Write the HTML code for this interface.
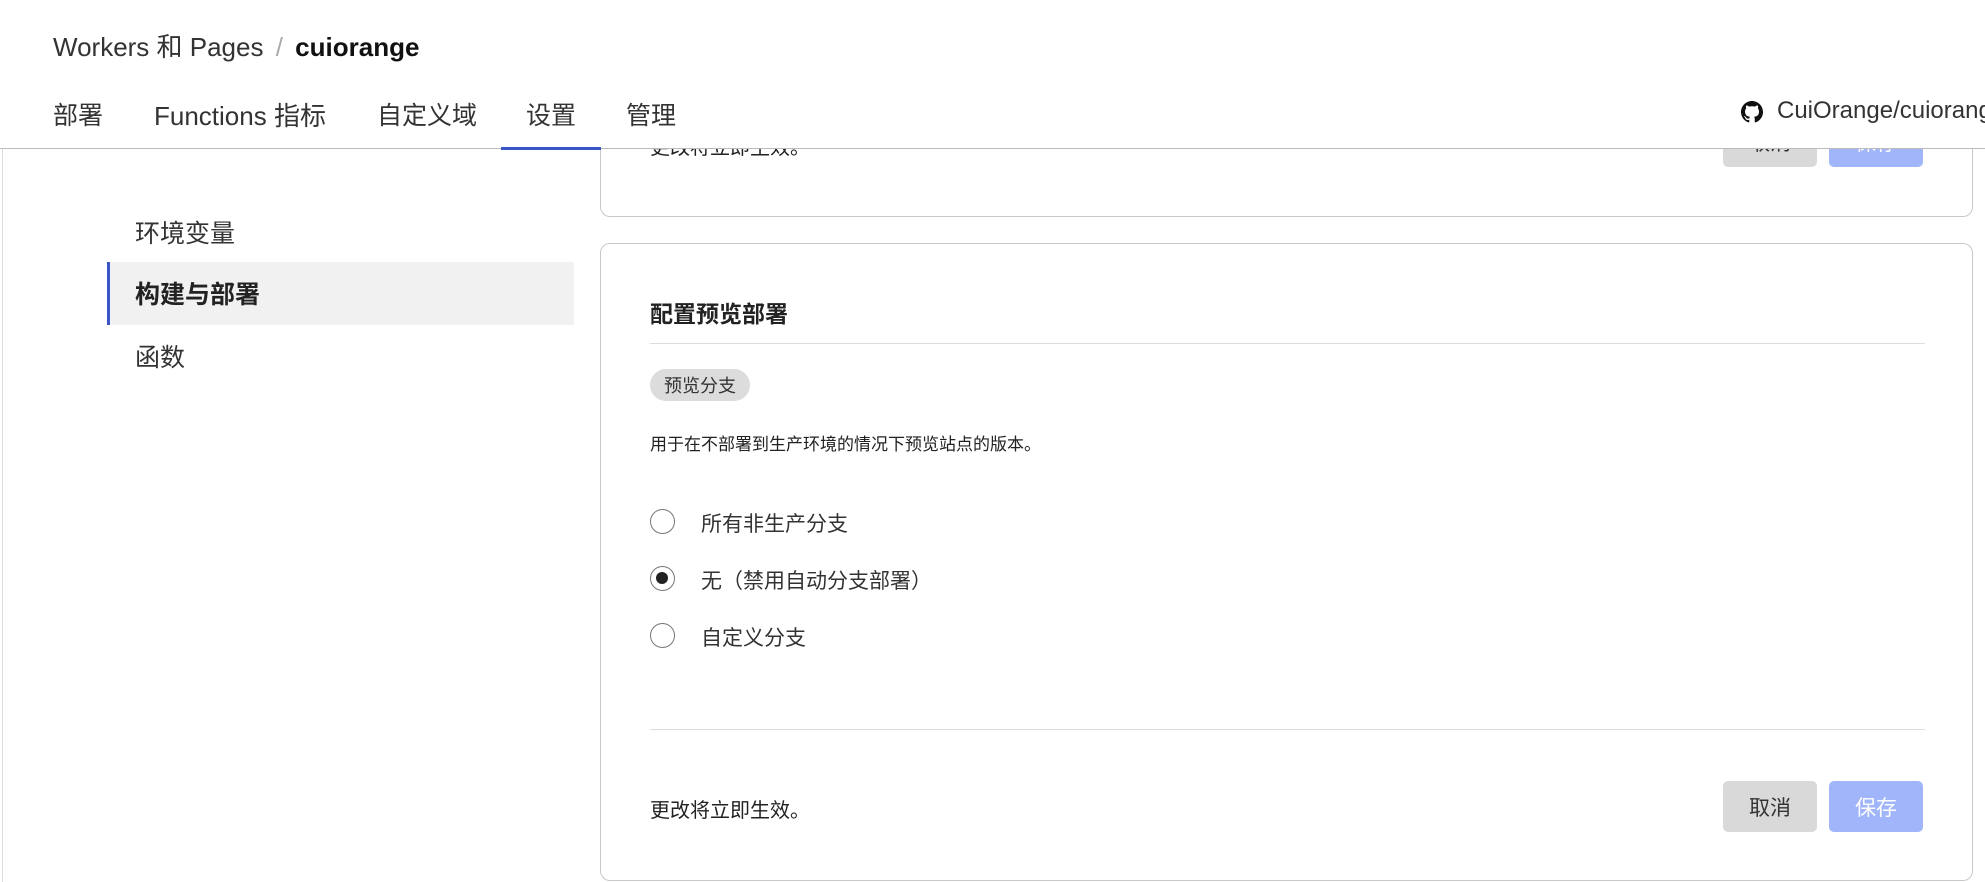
<!DOCTYPE html>
<html><head><meta charset="utf-8"><style>
*{margin:0;padding:0;box-sizing:border-box}
body{width:1985px;height:882px;overflow:hidden;background:#fff;font-family:"Liberation Sans","Noto Sans CJK SC",sans-serif;color:#222;position:relative}
.a{position:absolute;white-space:nowrap}
.card{position:absolute;border:1px solid #c8c8c8;border-radius:10px;background:#fff}
.btn{position:absolute;width:94px;height:51px;border-radius:5px;font-size:21px;display:flex;align-items:center;justify-content:center}
.radio{position:absolute;left:650px;width:25px;height:25px;border:1.5px solid #777;border-radius:50%}
</style></head><body>
<div class="a" style="left:2px;top:0;width:1px;height:882px;background:#ddd"></div>
<div class="card" style="left:600px;top:60px;width:1373px;height:157px">
  <div class="a" style="left:49px;top:70px;font-size:20px">更改将立即生效。</div>
  <div class="btn" style="left:1122px;top:55px;background:#d9d9d9;color:#333">取消</div>
  <div class="btn" style="left:1228px;top:55px;background:#a0b5fa;color:#fff">保存</div>
</div>
<div class="a" style="left:0;top:0;width:1985px;height:149px;background:#fff;border-bottom:1.5px solid #bbb"></div>
<div class="a" style="left:53px;top:27px;font-size:26px;color:#333">Workers 和 Pages <span style="color:#aaa;margin:0 5px">/</span> <b style="color:#111">cuiorange</b></div>
<div class="a" style="left:53px;top:96px;font-size:25px;color:#333">部署</div>
<div class="a" style="left:154px;top:96px;font-size:26px;color:#333">Functions 指标</div>
<div class="a" style="left:377px;top:96px;font-size:25px;color:#333">自定义域</div>
<div class="a" style="left:526px;top:96px;font-size:25px;color:#333">设置</div>
<div class="a" style="left:626px;top:96px;font-size:25px;color:#333">管理</div>
<div class="a" style="left:501px;top:147px;width:100px;height:3px;background:#3a55c8"></div>
<svg class="a" style="left:1741px;top:101px" width="22" height="22" viewBox="0 0 16 16"><path fill="#111" d="M8 0C3.58 0 0 3.58 0 8c0 3.54 2.29 6.53 5.47 7.59.4.07.55-.17.55-.38 0-.19-.01-.82-.01-1.49-2.010.37-2.53-.49-2.690-.94-.09-.23-.48-.94-.82-1.13-.28-.15-.68-.52-.01-.53.63-.01 1.08.58 1.23.82.72 1.21 1.87.87 2.33.66.07-.52.28-.87.51-1.07-1.78-.2-3.640-.89-3.640-3.95 0-.87.31-1.59.82-2.15-.08-.2-.36-1.02.08-2.12 0 0 .67-.21 2.2.82.64-.18 1.32-.27 2-.27.68 0 1.36.09 2 .27 1.53-1.04 2.2-.82 2.2-.82.44 1.1.16 1.92.08 2.12.51.56.82 1.27.82 2.15 0 3.07-1.87 3.75-3.65 3.95.29.25.54.73.54 1.48 0 1.07-.01 1.93-.01 2.2 0 .21.15.46.55.38A8.013 8.013 0 0016 8c0-4.42-3.58-8-8-8z"/></svg>
<div class="a" style="left:1777px;top:97px;font-size:24px;color:#333">CuiOrange/cuiorange</div>
<div class="a" style="left:135px;top:214px;font-size:25px;color:#333">环境变量</div>
<div class="a" style="left:107px;top:262px;width:467px;height:63px;background:#f1f1f1;border-left:3px solid #3a55c8"></div>
<div class="a" style="left:135px;top:275px;font-size:25px;font-weight:bold;color:#222">构建与部署</div>
<div class="a" style="left:135px;top:338px;font-size:25px;color:#333">函数</div>
<div class="card" style="left:600px;top:243px;width:1373px;height:638px">
  <div class="a" style="left:49px;top:51px;font-size:23px;font-weight:bold;color:#222">配置预览部署</div>
  <div class="a" style="left:49px;top:99px;width:1275px;height:1px;background:#ddd"></div>
  <div class="a" style="left:49px;top:125px;width:100px;height:32px;border-radius:16px;background:#dcdcdc;font-size:18px;color:#333;display:flex;align-items:center;justify-content:center">预览分支</div>
  <div class="a" style="left:49px;top:186px;font-size:17px;color:#222">用于在不部署到生产环境的情况下预览站点的版本。</div>
  <div class="a" style="left:100px;top:264px;font-size:21px;color:#333">所有非生产分支</div>
  <div class="a" style="left:100px;top:321px;font-size:21px;color:#333">无（禁用自动分支部署）</div>
  <div class="a" style="left:100px;top:378px;font-size:21px;color:#333">自定义分支</div>
  <div class="a" style="left:49px;top:485px;width:1275px;height:1px;background:#ddd"></div>
  <div class="a" style="left:49px;top:550px;font-size:20px;color:#222">更改将立即生效。</div>
  <div class="btn" style="left:1122px;top:537px;background:#d9d9d9;color:#333">取消</div>
  <div class="btn" style="left:1228px;top:537px;background:#a0b5fa;color:#fff">保存</div>
</div>
<div class="radio" style="top:509px"></div>
<div class="radio" style="top:566px"><div style="position:absolute;left:5px;top:5px;width:12px;height:12px;border-radius:50%;background:#222"></div></div>
<div class="radio" style="top:623px"></div>
</body></html>
